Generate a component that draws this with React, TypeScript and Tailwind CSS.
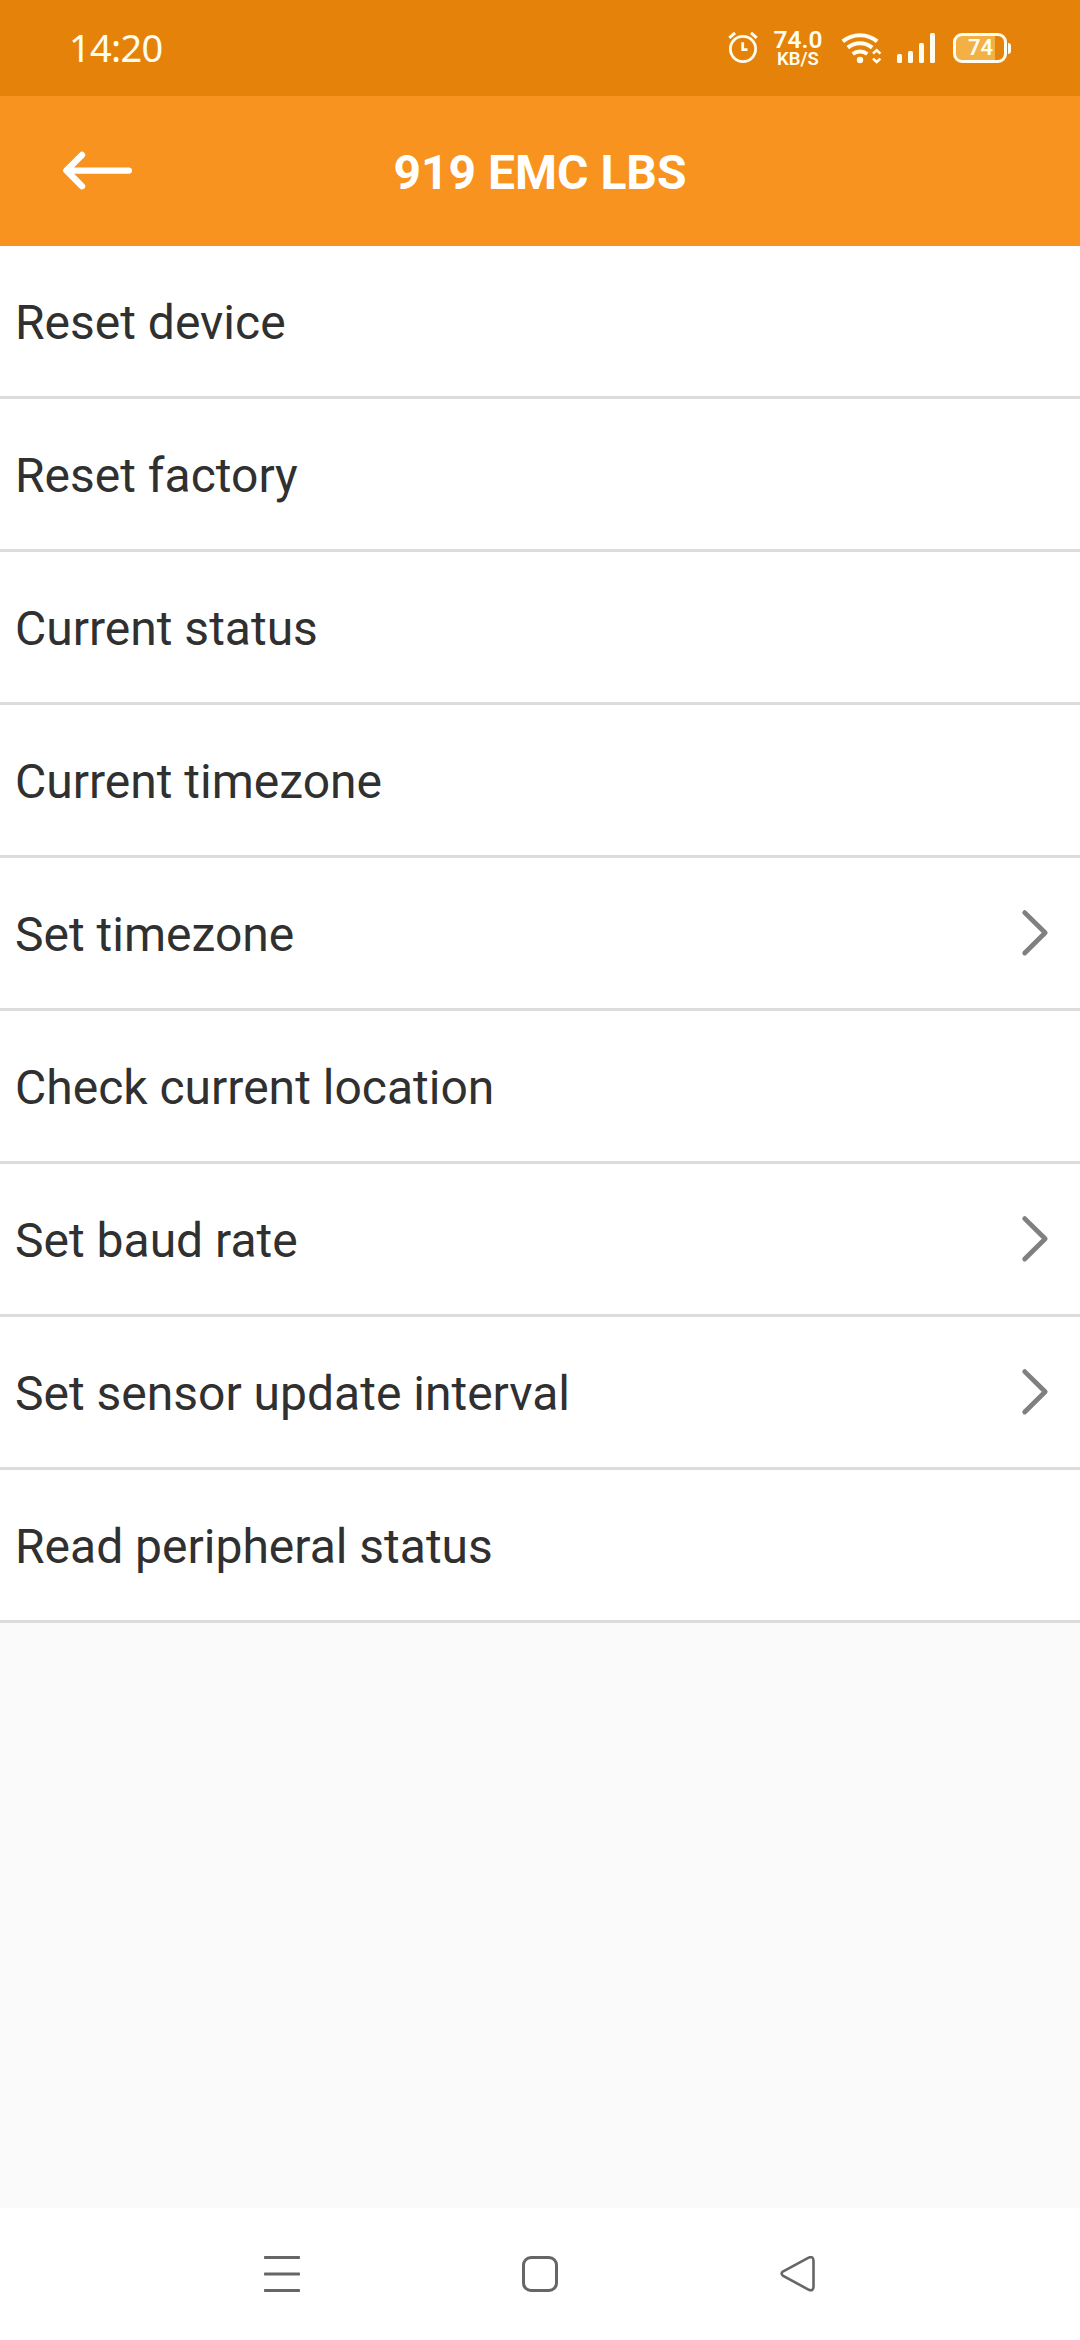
type Row = { label: string; nested?: boolean };

const rows: Row[] = [
  { label: "Reset device" },
  { label: "Reset factory" },
  { label: "Current status" },
  { label: "Current timezone" },
  { label: "Set timezone", nested: true },
  { label: "Check current location" },
  { label: "Set baud rate", nested: true },
  { label: "Set sensor update interval", nested: true },
  { label: "Read peripheral status" },
];

function AlarmIcon() {
  return (
    <svg className="h-9 w-8" viewBox="727 31 32 36" fill="none" stroke="#fffdf0" strokeWidth="2.8">
      <circle cx="743" cy="50" r="12.6" />
      <path d="M742.7 43.2V50.7H747.5" />
      <path d="M729.3 38.9L735 33.8M751 33.8L756.7 38.9" strokeWidth="3" />
    </svg>
  );
}

function WifiIcon() {
  return (
    <svg className="h-9 w-[42px]" viewBox="841 30 42 36" fill="none" stroke="#fffdf0" strokeWidth="4">
      <path d="M842.8 41.4A27 27 0 0 1 877.2 41.4" />
      <path d="M847.8 47.6A19 19 0 0 1 872.2 47.6" />
      <path d="M852.7 54A12 12 0 0 1 867.3 54" />
      <circle cx="860" cy="60" r="3.2" fill="#fffdf0" stroke="none" />
      <path d="M873 53.6L876.7 50.2L880.4 53.6M873 58.6L876.7 62L880.4 58.6" strokeWidth="2.6" />
    </svg>
  );
}

function StatusBar() {
  return (
    <div className="flex h-24 items-center bg-[#e58209] text-[#fffdf0]">
      <span className="ml-[69px] w-[100px] pb-[2px] font-['Noto_Sans',sans-serif] text-[38px] leading-[94px] tracking-[-0.7px]">
        14:20
      </span>
      <div className="ml-auto mr-[69px] flex items-center">
        <AlarmIcon />
        <div className="ml-[11px] mr-[15px] flex w-[56px] flex-col items-center font-semibold">
          <span className="pt-px text-[24.5px] leading-[21px]">74.0</span>
          <span className="text-[18.5px] leading-[18px]">KB/S</span>
        </div>
        <WifiIcon />
        <div className="ml-[14px] flex h-[30px] items-end gap-[6px]">
          <i className="h-[9px] w-[5px] rounded-[1.5px] bg-[#fffdf0]" />
          <i className="h-3 w-[5px] rounded-[1.5px] bg-[#fffdf0]" />
          <i className="h-5 w-[5px] rounded-[1.5px] bg-[#fffdf0]" />
          <i className="h-[30px] w-[5px] rounded-[1.5px] bg-[#fffdf0]" />
        </div>
        <div className="ml-[18px] flex h-[30px] w-[54px] items-center justify-center rounded-[9px] border-[3px] border-[#fffdf0] bg-[linear-gradient(90deg,#f3b045_81%,transparent_81%)] pl-px text-[22px] font-semibold leading-6">
          74
        </div>
        <i className="ml-px h-[11px] w-[3px] rounded-r-sm bg-[#fffdf0]" />
      </div>
    </div>
  );
}

function Header() {
  return (
    <header className="grid h-[150px] grid-cols-[200px_1fr_200px] items-center bg-[#f7931e] text-white">
      <svg className="ml-[60px] h-12 w-[76px]" viewBox="60 147 76 48" fill="none" stroke="white" strokeWidth="6.4" strokeLinecap="round" strokeLinejoin="round">
        <path d="M82 155L66.4 170.6L82 186.2M68 170.6H128.8" />
      </svg>
      <h1 className="pt-1 text-center text-[48px] font-bold leading-none">919 EMC LBS</h1>
    </header>
  );
}

function ListRow({ label, nested }: Row) {
  return (
    <li className="flex h-[153px] items-center justify-between border-b-[3px] border-[#dcdcdc] bg-white pl-[15px] pr-[30px]">
      <span className="pt-1 text-[48px] leading-[56px] text-[#303030]">{label}</span>
      {nested && (
        <svg className="h-[48px] w-[30px]" viewBox="1020 909 30 48" fill="none" stroke="#808080" strokeWidth="4.8" strokeLinecap="round" strokeLinejoin="round">
          <path d="M1024.7 912.6L1045.2 932.8L1024.7 953" />
        </svg>
      )}
    </li>
  );
}

function NavBar() {
  return (
    <nav className="flex h-[132px] justify-between bg-white px-[264px] pt-12">
      <svg className="h-9 w-9" viewBox="0 0 36 36" fill="#666">
        <rect width="36" height="3" rx="0.8" />
        <rect y="16.5" width="36" height="3" rx="0.8" />
        <rect y="33" width="36" height="3" rx="0.8" />
      </svg>
      <svg className="h-9 w-9" viewBox="0 0 36 36" fill="none" stroke="#666" strokeWidth="3">
        <rect x="1.5" y="1.5" width="33" height="33" rx="7.5" />
      </svg>
      <svg className="h-9 w-9" viewBox="780 2256 36 36" fill="none" stroke="#666" strokeWidth="2.6">
        <path d="M782.8 2271.6L808.6 2257.6Q813.5 2255.8 813.5 2261V2286.6Q813.5 2291.6 808.8 2289.8L782.8 2275.6Q780.4 2273.6 782.8 2271.6Z" />
      </svg>
    </nav>
  );
}

export default function App() {
  return (
    <div className="flex h-[2340px] w-[1080px] flex-col overflow-hidden bg-[#fafafa] font-[Roboto,sans-serif]">
      <StatusBar />
      <Header />
      <main className="flex-1">
        <ul>
          {rows.map((row) => (
            <ListRow key={row.label} {...row} />
          ))}
        </ul>
      </main>
      <NavBar />
    </div>
  );
}
